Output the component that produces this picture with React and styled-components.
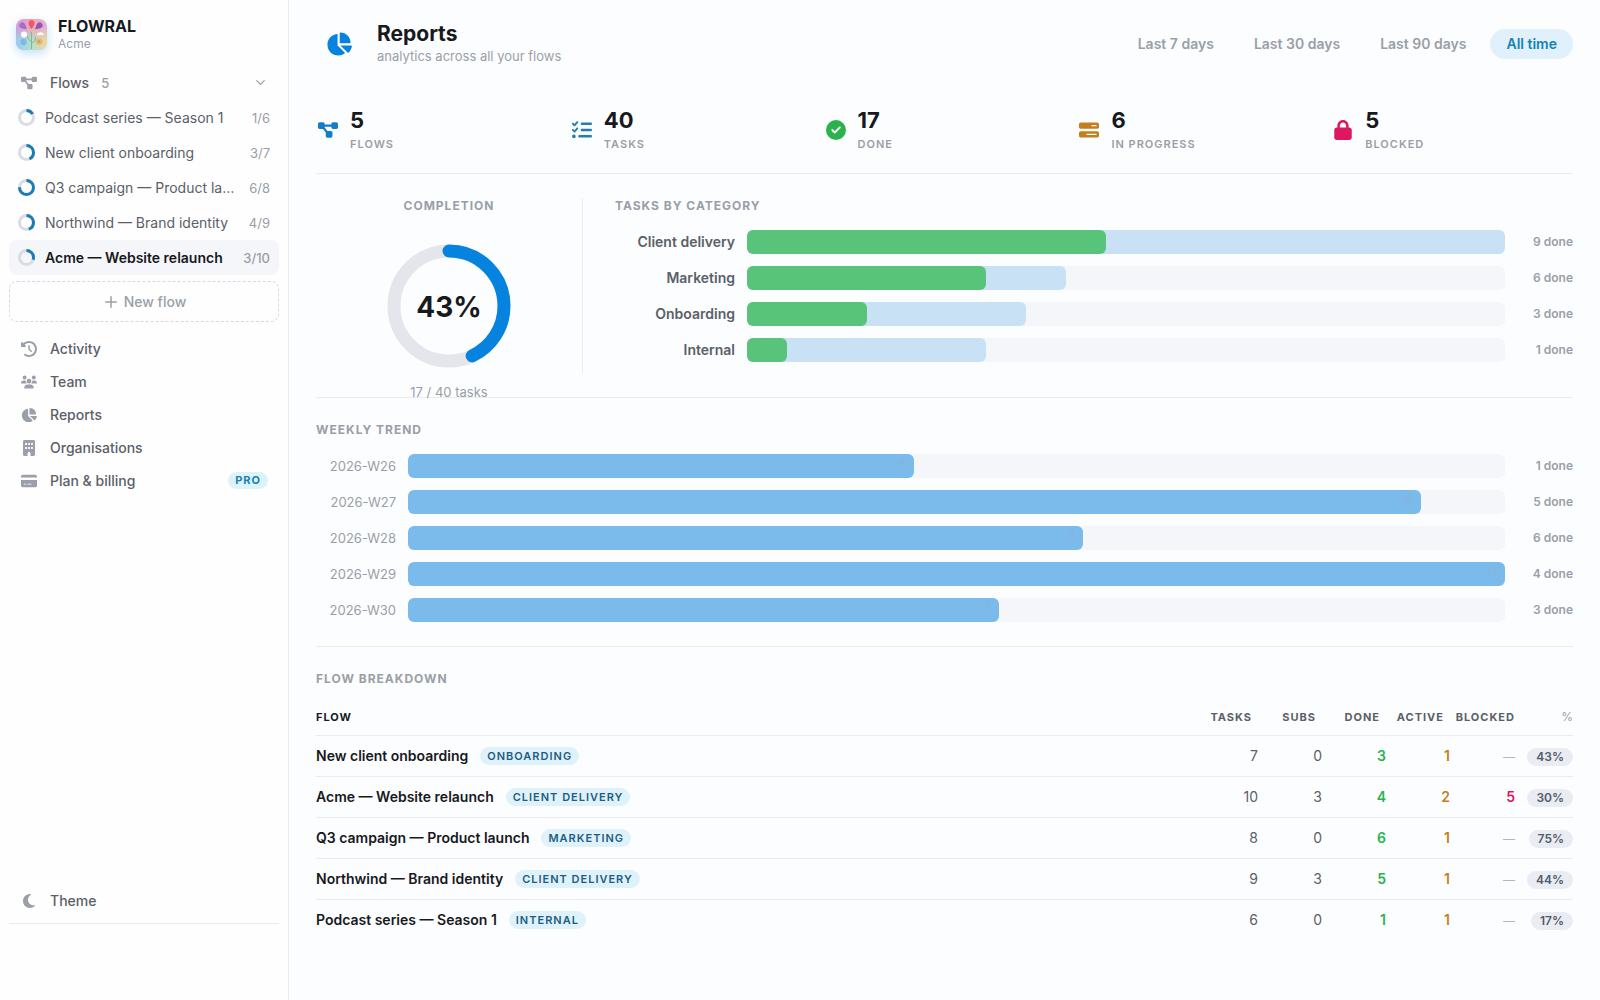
import React from "react";
import styled, { createGlobalStyle, css } from "styled-components";
import {
  FaDiagramProject,
  FaListCheck,
  FaCircleCheck,
  FaBarsProgress,
  FaLock,
  FaChartPie,
  FaClockRotateLeft,
  FaUsers,
  FaBuilding,
  FaCreditCard,
  FaMoon,
} from "react-icons/fa6";
import { ChevronDown, Plus } from "lucide-react";

const color = {
  ink: "#17191d",
  text: "#5b6067",
  muted: "#9a9fa7",
  line: "#e9ebef",
  track: "#f5f6fa",
  accent: "#0683df",
  teal: "#1483b0",
  green: "#2bb24c",
  amber: "#c47f1c",
  red: "#dd1760",
};

const GlobalStyle = createGlobalStyle`
  *, *::before, *::after { box-sizing: border-box; }
  body {
    margin: 0;
    font-family: Inter, "Liberation Sans", sans-serif;
    font-size: 14px;
    line-height: 20px;
    color: ${color.text};
    background: #fcfdff;
  }
  button { font: inherit; color: inherit; background: none; border: 0; padding: 0; cursor: pointer; }
  a { color: inherit; text-decoration: none; }
  h1, h2, p, ul { margin: 0; padding: 0; }
  li { list-style: none; }
`;

const Shell = styled.div`
  display: flex;
  min-height: 100vh;
`;

const Sidebar = styled.aside`
  display: flex;
  flex-direction: column;
  flex: 0 0 289px;
  min-width: 0;
  padding: 16px 9px 76px;
  background: #fefeff;
  border-right: 1px solid ${color.line};
`;

const Brand = styled.div`
  display: flex;
  align-items: center;
  gap: 11px;
  padding: 0 7px;
  height: 36px;
`;

const LogoSvg = styled.svg`
  width: 31px;
  height: 31px;
  border-radius: 8px;
  box-shadow: 0 3px 10px rgba(90, 180, 235, 0.4);
`;

const BrandName = styled.div`
  font-size: 16px;
  font-weight: 700;
  line-height: 20px;
  color: ${color.ink};
`;

const BrandOrg = styled.div`
  font-size: 12px;
  line-height: 16px;
  color: ${color.muted};
`;

const navRow = css`
  display: flex;
  align-items: center;
  gap: 12px;
  width: 100%;
  height: 33px;
  padding: 0 11px;
  font-weight: 500;
  text-align: left;
`;

const NavButton = styled.button`
  ${navRow}
`;

const NavLink = styled.a`
  ${navRow}
`;

const FlowsToggle = styled(NavButton)`
  margin: 14px 0 1px;
`;

const NavIcon = styled.span`
  display: flex;
  justify-content: center;
  flex: 0 0 18px;
  color: #9b9fa9;
  svg {
    flex: none;
    width: auto;
    height: 16px;
  }
`;

const NavCount = styled.span`
  flex: 1;
  font-size: 13px;
  color: ${color.muted};
`;

const FlowLink = styled.a`
  display: flex;
  align-items: center;
  gap: 10px;
  height: 35px;
  padding: 0 9px;
  border-radius: 8px;
  font-weight: ${(p) => (p.$active ? 600 : 400)};
  color: ${(p) => (p.$active ? color.ink : color.text)};
  background: ${(p) => (p.$active ? "#f5f6fa" : "transparent")};
`;

const FlowName = styled.span`
  flex: 1;
  min-width: 0;
  overflow: hidden;
  text-overflow: ellipsis;
  white-space: nowrap;
`;

const FlowCount = styled.span`
  padding-left: 4px;
  font-size: 13px;
  font-weight: ${(p) => (p.$active ? 500 : 400)};
  color: ${color.muted};
`;

const NewFlow = styled.button`
  display: flex;
  align-items: center;
  justify-content: center;
  gap: 4px;
  flex: none;
  height: 41px;
  margin: 6px 0 10px;
  border: 1px dashed #d5d8dd;
  border-radius: 8px;
  font-weight: 500;
  color: ${color.muted};
`;

const Pro = styled.span`
  margin-left: auto;
  padding: 0 7px;
  border-radius: 9px;
  font-size: 11px;
  font-weight: 700;
  line-height: 17px;
  letter-spacing: 1px;
  color: ${color.teal};
  background: #def2fa;
`;

const SidebarFoot = styled.div`
  margin-top: auto;
  padding-bottom: 6px;
  border-bottom: 1px solid ${color.line};
`;

const Main = styled.main`
  flex: 1;
  min-width: 0;
  padding: 22px 27px 24px;
`;

const Header = styled.header`
  display: flex;
  align-items: center;
  height: 44px;
  padding-left: 10px;
`;

const HeaderIcon = styled.span`
  display: flex;
  margin-right: 25px;
  color: ${color.accent};
  svg {
    width: 26px;
    height: 26px;
  }
`;

const Title = styled.h1`
  font-size: 21px;
  font-weight: 700;
  line-height: 24px;
  color: ${color.ink};
`;

const Subtitle = styled.p`
  font-size: 13px;
  line-height: 20px;
  color: ${color.muted};
`;

const Ranges = styled.div`
  display: flex;
  gap: 8px;
  margin-left: auto;
`;

const Range = styled.button`
  height: 30px;
  padding: 0 16px;
  border-radius: 15px;
  font-weight: 600;
  color: ${(p) => (p.$active ? color.teal : color.muted)};
  background: ${(p) => (p.$active ? "#e0f1fb" : "transparent")};
`;

const Stats = styled.section`
  display: grid;
  grid-template-columns: repeat(5, 1fr);
  gap: 12px;
  padding: 40px 0 19px;
  border-bottom: 1px solid ${color.line};
`;

const Stat = styled.div`
  display: flex;
  align-items: center;
  gap: 12px;
  height: 48px;
  padding-left: 2px;
`;

const StatIcon = styled.span`
  display: flex;
  color: ${(p) => p.$color};
  svg {
    width: auto;
    height: 20px;
  }
`;

const StatValue = styled.div`
  font-size: 22px;
  font-weight: 700;
  line-height: 28px;
  color: ${color.ink};
`;

const StatLabel = styled.div`
  font-size: 11px;
  font-weight: 600;
  line-height: 20px;
  letter-spacing: 1px;
  text-transform: uppercase;
  color: ${color.muted};
`;

const Section = styled.section`
  padding: 24px 0;
  border-bottom: ${(p) => (p.$last ? "0" : `1px solid ${color.line}`)};
`;

const SectionTitle = styled.h2`
  flex: none;
  margin-bottom: 16px;
  font-size: 12px;
  font-weight: 700;
  line-height: 16px;
  letter-spacing: 1px;
  text-transform: uppercase;
  color: ${color.muted};
`;

const Split = styled(Section)`
  display: grid;
  grid-template-columns: 267px 1fr;
  min-height: 224px;
`;

const Completion = styled.div`
  display: flex;
  flex-direction: column;
  align-items: center;
  height: 0;
  min-height: 100%;
  border-right: 1px solid ${color.line};
`;

const Donut = styled.svg`
  flex: none;
  width: 152px;
  height: 152px;
`;

const DonutText = styled.text`
  font-size: 28px;
  font-weight: 700;
  text-anchor: middle;
  fill: ${color.ink};
`;

const DonutCaption = styled.p`
  flex: none;
  font-size: 13px;
  line-height: 20px;
  color: ${color.muted};
`;

const Categories = styled.div`
  padding-left: 32px;
`;

const Bars = styled.div`
  display: grid;
  gap: 12px;
`;

const BarRow = styled.div`
  display: grid;
  grid-template-columns: ${(p) => p.$label}px 1fr 56px;
  gap: 12px;
  align-items: center;
  height: 24px;
`;

const BarLabel = styled.span`
  font-size: ${(p) => (p.$strong ? 14 : 13)}px;
  font-weight: ${(p) => (p.$strong ? 600 : 400)};
  text-align: right;
  color: ${(p) => (p.$strong ? color.text : color.muted)};
`;

const Track = styled.div`
  display: grid;
  height: 24px;
  border-radius: 6px;
  background: ${color.track};
`;

const Fill = styled.div`
  grid-area: 1 / 1;
  height: 24px;
  padding-right: 8px;
  border-radius: 6px;
  font-size: 10px;
  line-height: 18px;
  text-align: right;
  color: #8bb0d6;
  background: ${(p) => p.$color};
`;

const BarDone = styled.span`
  font-size: 12px;
  font-weight: 600;
  text-align: right;
  color: ${color.muted};
`;

const Table = styled.table`
  width: 100%;
  table-layout: fixed;
  border-collapse: collapse;
`;

const Col = styled.col`
  width: ${(p) => (p.$w ? `${p.$w}px` : "auto")};
`;

const Th = styled.th`
  padding: ${(p) => (p.$inset ? "6px 6px 10px 0" : "6px 0 10px")};
  border-bottom: 1px solid ${color.line};
  font-size: ${(p) => (p.$light ? 12 : 11)}px;
  font-weight: ${(p) => (p.$light ? 400 : 700)};
  line-height: 16px;
  letter-spacing: ${(p) => (p.$light ? "0" : "1px")};
  text-align: ${(p) => (p.$left ? "left" : "right")};
  color: ${(p) => (p.$left ? color.ink : p.$light ? color.muted : color.text)};
`;

const Tr = styled.tr`
  height: 41px;
  border-bottom: 1px solid ${color.line};
  &:last-child { border-bottom: 0; }
`;

const Td = styled.td`
  padding: 0;
  text-align: right;
  font-weight: ${(p) => (p.$color ? 600 : 400)};
  color: ${(p) => p.$color || color.text};
`;

const FlowCell = styled.div`
  display: flex;
  align-items: center;
  gap: 12px;
  font-weight: 600;
  color: ${color.ink};
`;

const Chip = styled.span`
  padding: 0 7px;
  border-radius: 9px;
  font-size: 11px;
  font-weight: 600;
  line-height: 18px;
  letter-spacing: 1px;
  text-transform: uppercase;
  color: #1d5d84;
  background: #dff2fa;
`;

const Pct = styled.span`
  display: inline-block;
  padding: 0 9px;
  border-radius: 9px;
  font-size: 12px;
  font-weight: 600;
  line-height: 18px;
  color: #535b6b;
  background: #e9ecf2;
`;

const Dash = styled.span`
  font-weight: 400;
  font-size: 12px;
  color: #b3b7bd;
`;

function Logo() {
  const petals = [
    { x: 7, y: 7, r: -50, c: "#a56bd0" },
    { x: 15.5, y: 5, r: 0, c: "#e8586e" },
    { x: 23, y: 7, r: 50, c: "#9457b5" },
  ];
  return (
    <LogoSvg viewBox="0 0 31 31" role="img" aria-label="Flowral logo">
      <defs>
        <linearGradient id="lg-top" x1="0" y1="0" x2="1" y2="0">
          <stop offset="0" stopColor="#cf9de0" />
          <stop offset="0.5" stopColor="#f4a6b0" />
          <stop offset="1" stopColor="#e2b3d4" />
        </linearGradient>
        <linearGradient id="lg-bottom" x1="0" y1="0" x2="1" y2="0">
          <stop offset="0" stopColor="#95cdf0" />
          <stop offset="0.5" stopColor="#b3e0cf" />
          <stop offset="1" stopColor="#f1d79b" />
        </linearGradient>
        <linearGradient id="lg-fade" x1="0" y1="0" x2="0" y2="1">
          <stop offset="0.25" stopColor="#fff" stopOpacity="0" />
          <stop offset="0.7" stopColor="#fff" stopOpacity="1" />
        </linearGradient>
        <mask id="lg-mask">
          <rect width="31" height="31" fill="url(#lg-fade)" />
        </mask>
      </defs>
      <rect width="31" height="31" fill="url(#lg-top)" />
      <rect width="31" height="31" fill="url(#lg-bottom)" mask="url(#lg-mask)" />
      {petals.map((p) => (
        <path
          key={p.x}
          d="M0 5C-3 1-3.4-1-2.6-2.6C-1.8-4.2 1.8-4.2 2.6-2.6C3.4-1 3 1 0 5z"
          fill={p.c}
          transform={`translate(${p.x} ${p.y}) rotate(${p.r})`}
        />
      ))}
      <circle cx="8" cy="15.5" r="3" fill="#fff" />
      <path d="M21 16c0-3 6-4 7 0-2-1-5 1-7 0z" fill="#fff" />
      <path d="M15.5 13v17M15.5 22c-3-1-4-3-4-5M15.5 24c3-1 4-3 4-6" fill="none" stroke="#6fb98c" strokeWidth="0.9" />
      <circle cx="7.5" cy="23" r="3.2" fill="#7dbbe4" />
      <circle cx="23" cy="22.5" r="3.6" fill="#e3bd7c" />
      <circle cx="23" cy="22.5" r="1.6" fill="#cf9c6c" />
    </LogoSvg>
  );
}

const RingSvg = styled.svg`
  flex: none;
  width: 17px;
  height: 17px;
`;

function Ring({ value }) {
  const c = 2 * Math.PI * 7;
  return (
    <RingSvg viewBox="0 0 17 17" aria-hidden="true">
      <circle cx="8.5" cy="8.5" r="7" fill="none" stroke="#d9dce2" strokeWidth="3" />
      <circle
        cx="8.5"
        cy="8.5"
        r="7"
        fill="none"
        stroke="#1b7cb4"
        strokeWidth="3"
        strokeDasharray={`${c * value} ${c}`}
        transform="rotate(-90 8.5 8.5)"
      />
    </RingSvg>
  );
}

const flows = [
  { name: "Podcast series — Season 1", done: 1, total: 6 },
  { name: "New client onboarding", done: 3, total: 7 },
  { name: "Q3 campaign — Product launch", done: 6, total: 8 },
  { name: "Northwind — Brand identity", done: 4, total: 9 },
  { name: "Acme — Website relaunch", done: 3, total: 10, active: true },
];

const nav = [
  { label: "Activity", icon: FaClockRotateLeft },
  { label: "Team", icon: FaUsers },
  { label: "Reports", icon: FaChartPie },
  { label: "Organisations", icon: FaBuilding },
  { label: "Plan & billing", icon: FaCreditCard, badge: "PRO" },
];

const ranges = ["Last 7 days", "Last 30 days", "Last 90 days", "All time"];

const stats = [
  { value: 5, label: "Flows", icon: FaDiagramProject, tint: "#127dc8" },
  { value: 40, label: "Tasks", icon: FaListCheck, tint: "#217fae" },
  { value: 17, label: "Done", icon: FaCircleCheck, tint: color.green },
  { value: 6, label: "In progress", icon: FaBarsProgress, tint: color.amber },
  { value: 5, label: "Blocked", icon: FaLock, tint: color.red },
];

const categories = [
  { name: "Client delivery", total: 19, done: 9 },
  { name: "Marketing", total: 8, done: 6 },
  { name: "Onboarding", total: 7, done: 3 },
  { name: "Internal", total: 6, done: 1 },
];

const weeks = [
  { name: "2026-W26", count: 6, done: 1 },
  { name: "2026-W27", count: 12, done: 5 },
  { name: "2026-W28", count: 8, done: 6 },
  { name: "2026-W29", count: 13, done: 4 },
  { name: "2026-W30", count: 7, done: 3 },
];

const breakdown = [
  { name: "New client onboarding", tag: "Onboarding", tasks: 7, subs: 0, done: 3, active: 1, blocked: 0, pct: 43 },
  { name: "Acme — Website relaunch", tag: "Client delivery", tasks: 10, subs: 3, done: 4, active: 2, blocked: 5, pct: 30 },
  { name: "Q3 campaign — Product launch", tag: "Marketing", tasks: 8, subs: 0, done: 6, active: 1, blocked: 0, pct: 75 },
  { name: "Northwind — Brand identity", tag: "Client delivery", tasks: 9, subs: 3, done: 5, active: 1, blocked: 0, pct: 44 },
  { name: "Podcast series — Season 1", tag: "Internal", tasks: 6, subs: 0, done: 1, active: 1, blocked: 0, pct: 17 },
];

const width = (part, max) => ({ width: `${(part / max) * 100}%` });

function SidePanel() {
  return (
    <Sidebar>
      <Brand>
        <Logo />
        <div>
          <BrandName>FLOWRAL</BrandName>
          <BrandOrg>Acme</BrandOrg>
        </div>
      </Brand>
      <FlowsToggle type="button" aria-expanded="true">
        <NavIcon><FaDiagramProject /></NavIcon>
        Flows
        <NavCount>5</NavCount>
        <ChevronDown size={15} color={color.muted} />
      </FlowsToggle>
      <ul>
        {flows.map((f) => (
          <li key={f.name}>
            <FlowLink href="#" $active={f.active}>
              <Ring value={f.done / f.total} />
              <FlowName>{f.name}</FlowName>
              <FlowCount $active={f.active}>{`${f.done}/${f.total}`}</FlowCount>
            </FlowLink>
          </li>
        ))}
      </ul>
      <NewFlow type="button">
        <Plus size={18} strokeWidth={2} />
        New flow
      </NewFlow>
      <nav>
        {nav.map(({ label, icon: Icon, badge }) => (
          <NavLink href="#" key={label}>
            <NavIcon><Icon /></NavIcon>
            {label}
            {badge && <Pro>{badge}</Pro>}
          </NavLink>
        ))}
      </nav>
      <SidebarFoot>
        <NavButton type="button">
          <NavIcon><FaMoon /></NavIcon>
          Theme
        </NavButton>
      </SidebarFoot>
    </Sidebar>
  );
}

function CompletionDonut() {
  const c = 2 * Math.PI * 55;
  return (
    <Donut viewBox="0 0 152 152">
      <circle cx="76" cy="76" r="55" fill="none" stroke="#e4e6eb" strokeWidth="13" />
      <circle
        cx="76"
        cy="76"
        r="55"
        fill="none"
        stroke={color.accent}
        strokeWidth="13"
        strokeLinecap="round"
        strokeDasharray={`${c * 0.43} ${c}`}
        transform="rotate(-90 76 76)"
      />
      <DonutText x="76" y="87">43%</DonutText>
    </Donut>
  );
}

export default function App() {
  return (
    <>
      <GlobalStyle />
      <Shell>
        <SidePanel />
        <Main>
          <Header>
            <HeaderIcon><FaChartPie /></HeaderIcon>
            <div>
              <Title>Reports</Title>
              <Subtitle>analytics across all your flows</Subtitle>
            </div>
            <Ranges>
              {ranges.map((r) => (
                <Range type="button" key={r} $active={r === "All time"}>{r}</Range>
              ))}
            </Ranges>
          </Header>

          <Stats>
            {stats.map(({ value, label, icon: Icon, tint }) => (
              <Stat key={label}>
                <StatIcon $color={tint}><Icon /></StatIcon>
                <div>
                  <StatValue>{value}</StatValue>
                  <StatLabel>{label}</StatLabel>
                </div>
              </Stat>
            ))}
          </Stats>

          <Split>
            <Completion>
              <SectionTitle>Completion</SectionTitle>
              <CompletionDonut />
              <DonutCaption>17 / 40 tasks</DonutCaption>
            </Completion>
            <Categories>
              <SectionTitle>Tasks by category</SectionTitle>
              <Bars>
                {categories.map((c) => (
                  <BarRow key={c.name} $label={120}>
                    <BarLabel $strong>{c.name}</BarLabel>
                    <Track>
                      <Fill $color="#c9e1f5" style={width(c.total, 19)} />
                      <Fill $color="#57c47a" style={width(c.done, 19)} />
                    </Track>
                    <BarDone>{c.done} done</BarDone>
                  </BarRow>
                ))}
              </Bars>
            </Categories>
          </Split>

          <Section>
            <SectionTitle>Weekly trend</SectionTitle>
            <Bars>
              {weeks.map((w) => (
                <BarRow key={w.name} $label={80}>
                  <BarLabel>{w.name}</BarLabel>
                  <Track>
                    <Fill $color="#7bbbec" style={width(w.count, 13)}>{w.count}</Fill>
                  </Track>
                  <BarDone>{w.done} done</BarDone>
                </BarRow>
              ))}
            </Bars>
          </Section>

          <Section $last>
            <SectionTitle>Flow breakdown</SectionTitle>
            <Table>
              <colgroup>
                <Col />
                <Col $w={64} />
                <Col $w={64} />
                <Col $w={64} />
                <Col $w={64} />
                <Col $w={65} />
                <Col $w={58} />
              </colgroup>
              <thead>
                <tr>
                  <Th $left>FLOW</Th>
                  <Th $inset>TASKS</Th>
                  <Th $inset>SUBS</Th>
                  <Th $inset>DONE</Th>
                  <Th $inset>ACTIVE</Th>
                  <Th>BLOCKED</Th>
                  <Th $light>%</Th>
                </tr>
              </thead>
              <tbody>
                {breakdown.map((b) => (
                  <Tr key={b.name}>
                    <Td>
                      <FlowCell>
                        {b.name}
                        <Chip>{b.tag}</Chip>
                      </FlowCell>
                    </Td>
                    <Td>{b.tasks}</Td>
                    <Td>{b.subs}</Td>
                    <Td $color={color.green}>{b.done}</Td>
                    <Td $color={color.amber}>{b.active}</Td>
                    <Td $color={color.red}>{b.blocked || <Dash>—</Dash>}</Td>
                    <Td><Pct>{b.pct}%</Pct></Td>
                  </Tr>
                ))}
              </tbody>
            </Table>
          </Section>
        </Main>
      </Shell>
    </>
  );
}
